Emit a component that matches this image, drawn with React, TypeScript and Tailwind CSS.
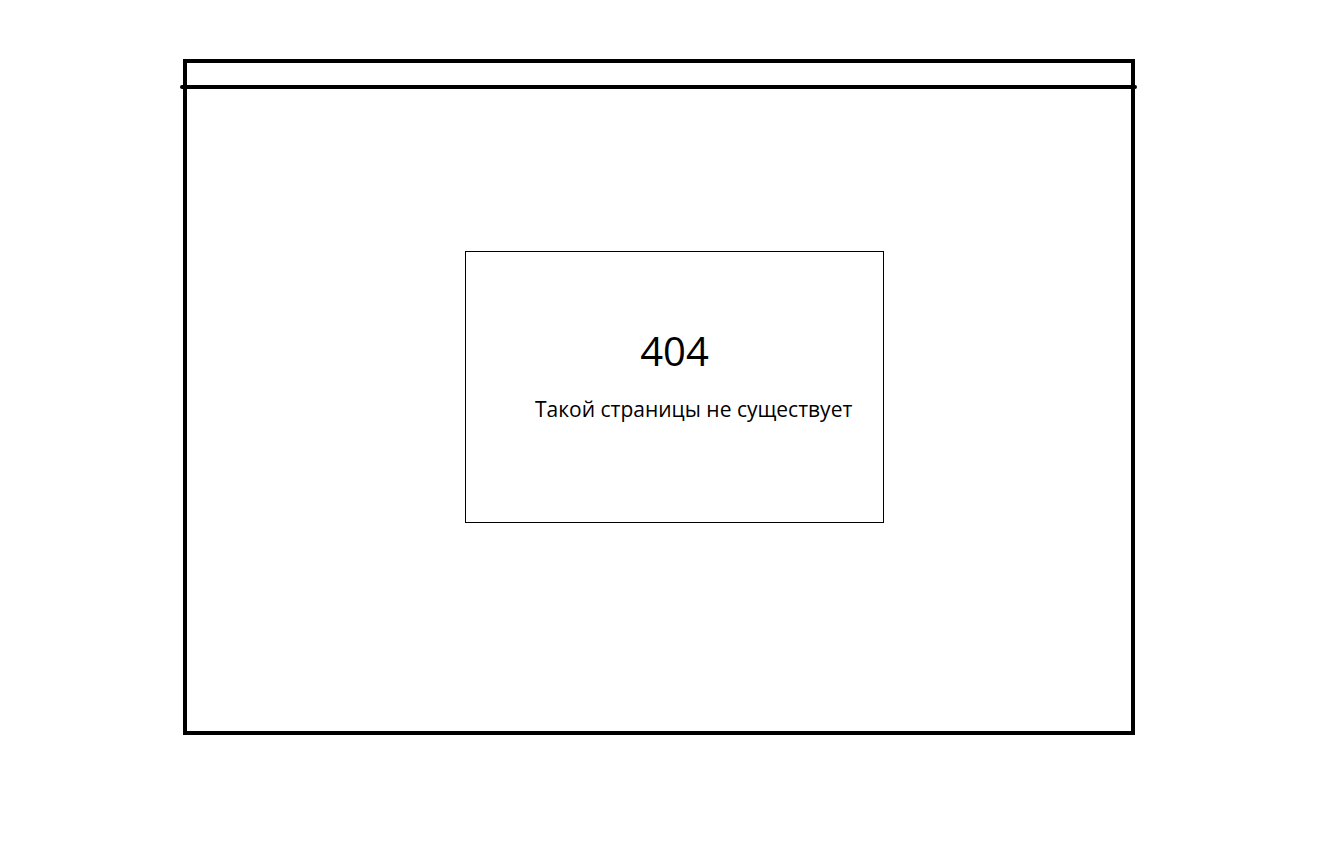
export default function App() {
	return (
		<div className="min-h-[850px] bg-white pl-[183px] pt-[59px] font-['Open_Sans',sans-serif] text-black">
			<div className="flex h-[676px] w-[952px] flex-col border-4 border-black">
				{/* header divider, slightly longer than the frame */}
				<div className="-ml-[7px] -mr-[6px] mt-[22px] h-[4px] rounded-full bg-black" />
				<div className="ml-[278px] mt-[162px] h-[272px] w-[419px] border border-black">
					<div className="mt-[75px] text-center text-[40px] leading-[48px]">404</div>
					<div className="mt-[20px] pl-[69px] text-[21px] leading-[28px]">
						Такой страницы не существует
					</div>
				</div>
			</div>
		</div>
	);
}
